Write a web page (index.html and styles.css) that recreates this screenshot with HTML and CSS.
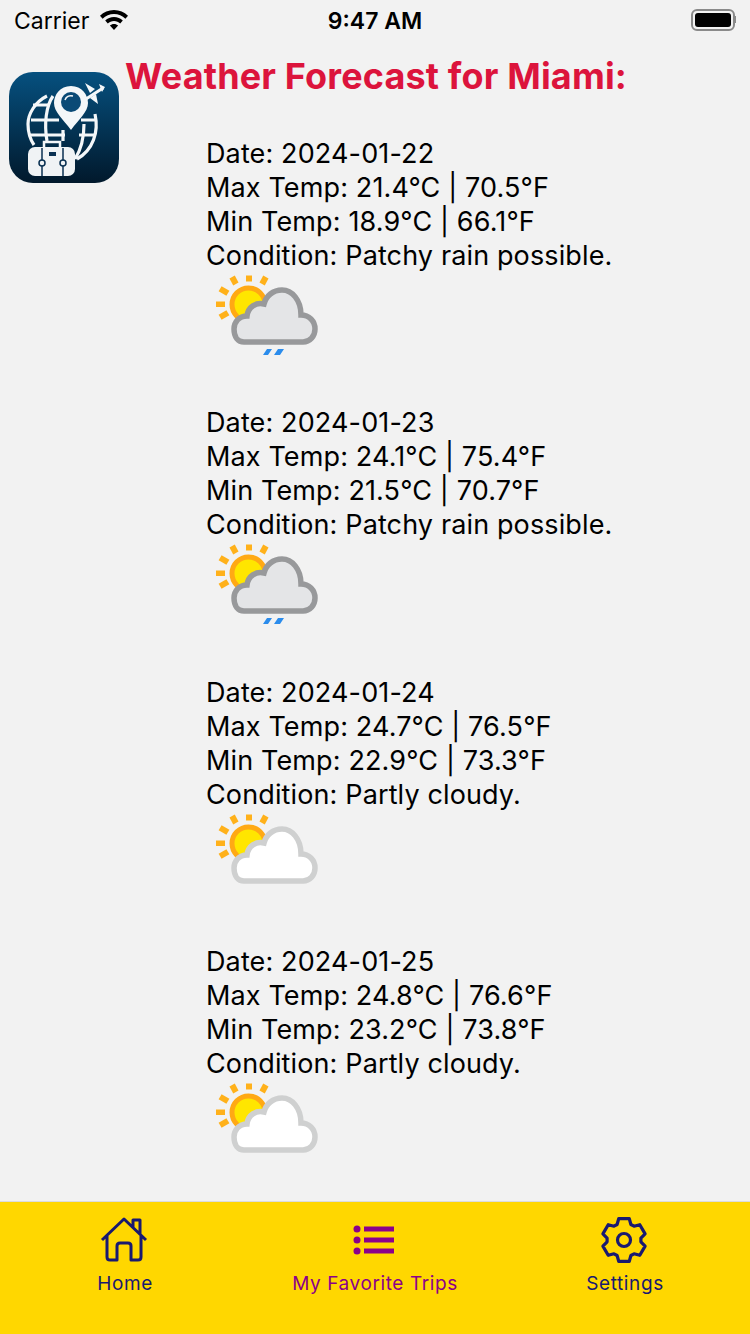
FILE: index.html
```html
<!DOCTYPE html>
<html lang="en">
<head>
<meta charset="utf-8">
<title>Weather Forecast</title>
<link rel="stylesheet" href="styles.css">
</head>
<body>
<svg class="defs" width="0" height="0" aria-hidden="true">
  <defs>
    <g id="sun" transform="translate(0 -1.500)">
      <g fill="#ffb11a">
        <rect x="46" y="11" width="6" height="6"/>
        <rect x="31" y="12" width="6" height="8" transform="rotate(-28 34 16)"/>
        <rect x="61" y="12" width="6" height="8" transform="rotate(28 64 16)"/>
        <rect x="21" y="22" width="6" height="9" transform="rotate(-60 24 26.500)"/>
        <rect x="16" y="37" width="9" height="5.500"/>
        <rect x="21" y="46" width="6" height="9" transform="rotate(60 24 50.500)"/>
      </g>
      <circle cx="48.500" cy="40" r="16.500" fill="#ffe600" stroke="#ffa914" stroke-width="5"/>
    </g>
    <path id="cloud" d="M44 76H103C110 76 115 70 115 63C115 55 109 49 101 49C101 34 92 24 82 24C73 24 66 30 64 38C56 36 48 41 47 50C39 50 34 56 34 63C34 71 38 76 44 76Z"/>
    <symbol id="rain-icon" viewBox="0 0 130 100">
      <use href="#sun"/>
      <use href="#cloud" fill="#e4e5e7" stroke="#98999b" stroke-width="5.500"/>
      <path d="M67 83H72L68 89H63ZM78 83H84L80 89H74Z" fill="#2b8cec"/>
    </symbol>
    <symbol id="cloudy-icon" viewBox="0 0 130 100">
      <use href="#sun"/>
      <use href="#cloud" fill="#fff" stroke="#cfd0d0" stroke-width="5.500"/>
    </symbol>
  </defs>
</svg>

<header class="status">
  <div class="status-left">
    <span>Carrier</span>
    <svg class="wifi" viewBox="0 0 30 22"><path d="M15 2C9.500 2 4.700 4.200 1 7.800L3.600 10.700C6.600 7.800 10.600 6 15 6S23.400 7.800 26.400 10.700L29 7.800C25.300 4.200 20.500 2 15 2ZM15 9C11.600 9 8.500 10.300 6.200 12.600L8.800 15.500C10.400 14 12.600 13 15 13S19.600 14 21.200 15.500L23.800 12.600C21.500 10.300 18.400 9 15 9ZM15 16C13.400 16 12 16.600 10.900 17.600L15 22L19.100 17.600C18 16.600 16.600 16 15 16Z"/></svg>
  </div>
  <div class="status-time">9:47 AM</div>
  <div class="status-right">
    <div class="battery"><div class="battery-fill"></div></div>
    <div class="battery-cap"></div>
  </div>
</header>

<main class="main">
  <svg class="logo" viewBox="0 0 110 111">
    <defs>
      <linearGradient id="logo-bg" x1="0" y1="0" x2="0" y2="1">
        <stop offset="0" stop-color="#06507f"/>
        <stop offset="1" stop-color="#01192c"/>
      </linearGradient>
    </defs>
    <rect width="110" height="111" rx="24" fill="url(#logo-bg)"/>
    <g fill="none" stroke="#f4f7f9" stroke-width="3.200">
      <path d="M38 24C26 30 19 42 19 52C19 60 21 67 25 73M86 42C90 60 84 78 68 87"/>
      <path d="M44 24C37 34 35 52 38 69M75 52C75 64 73 76 66 87M54 58V69"/>
      <path d="M24 33H40M22 48H50M72 48H86M20 63H56M70 63H85"/>
    </g>
    <path d="M62 14C51 14 45 23 45 31C45 40 54 47 62 58C70 47 79 40 79 31C79 23 73 14 62 14Z" fill="#f4f7f9"/>
    <circle cx="62" cy="30" r="10" fill="#0a4a76"/>
    <path d="M56 28C57 25 60 23 64 24" fill="none" stroke="#f4f7f9" stroke-width="1.500"/>
    <path d="M77 27L94 16" fill="none" stroke="#f4f7f9" stroke-width="3"/>
    <path d="M76 11L86 17L81 21ZM81 26L87 22L89 32ZM90 12L96 15L93 20Z" fill="#f4f7f9"/>
    <path d="M35 75V70H51V75" fill="none" stroke="#f4f7f9" stroke-width="2.500"/>
    <rect x="19" y="75" width="47" height="29" rx="7" fill="#f0f3f5"/>
    <path d="M33 76V104M54 76V104" stroke="#0a3152" stroke-width="1.500"/>
    <circle cx="33" cy="91" r="3" fill="#f0f3f5" stroke="#0a3152" stroke-width="1.500"/>
    <circle cx="54" cy="91" r="3" fill="#f0f3f5" stroke="#0a3152" stroke-width="1.500"/>
    <rect x="40" y="80" width="7" height="4" fill="#0a3152"/>
  </svg>
  <div class="content">
    <h1 class="title">Weather Forecast for Miami:</h1>
    <div class="forecasts">
      <section class="day">
        <p>Date: 2024-01-22</p>
        <p>Max Temp: 21.4°C | 70.5°F</p>
        <p>Min Temp: 18.9°C | 66.1°F</p>
        <p>Condition: Patchy rain possible.</p>
        <svg class="weather"><use href="#rain-icon"/></svg>
      </section>
      <section class="day">
        <p>Date: 2024-01-23</p>
        <p>Max Temp: 24.1°C | 75.4°F</p>
        <p>Min Temp: 21.5°C | 70.7°F</p>
        <p>Condition: Patchy rain possible.</p>
        <svg class="weather"><use href="#rain-icon"/></svg>
      </section>
      <section class="day">
        <p>Date: 2024-01-24</p>
        <p>Max Temp: 24.7°C | 76.5°F</p>
        <p>Min Temp: 22.9°C | 73.3°F</p>
        <p>Condition: Partly cloudy.</p>
        <svg class="weather"><use href="#cloudy-icon"/></svg>
      </section>
      <section class="day">
        <p>Date: 2024-01-25</p>
        <p>Max Temp: 24.8°C | 76.6°F</p>
        <p>Min Temp: 23.2°C | 73.8°F</p>
        <p>Condition: Partly cloudy.</p>
        <svg class="weather"><use href="#cloudy-icon"/></svg>
      </section>
    </div>
  </div>
</main>

<nav class="tabbar">
  <div class="tab">
    <svg class="tab-icon" viewBox="0 0 48 48" fill="none" stroke="#191970" stroke-width="3" stroke-linejoin="round"><path d="M2 24L24 3L46 24M7 20V41C7 43 8 44 10 44H17V30C17 28 18 27 20 27H28C30 27 31 28 31 30V44H38C40 44 41 43 41 41V20M33 11V4H40V18"/></svg>
    <span>Home</span>
  </div>
  <div class="tab tab-active">
    <svg class="tab-icon" viewBox="0 0 48 48" fill="#8b008b"><circle cx="7" cy="13" r="3.500"/><circle cx="7" cy="24" r="3.500"/><circle cx="7" cy="35" r="3.500"/><rect x="14" y="10.500" width="30" height="5"/><rect x="14" y="21.500" width="30" height="5"/><rect x="14" y="32.500" width="30" height="5"/></svg>
    <span>My Favorite Trips</span>
  </div>
  <div class="tab">
    <svg class="tab-icon" viewBox="0 0 48 48" fill="none" stroke="#191970" stroke-width="3.200" stroke-linejoin="round"><circle cx="24" cy="24" r="6.500"/><path d="M18.700 2.700L29.300 2.700L30.900 8.500L34 10.200L39.800 8.700L45.100 17.900L40.900 22.200L40.900 25.800L45.100 30.100L39.800 39.300L34 37.800L30.900 39.500L29.300 45.300L18.700 45.300L17.100 39.500L14 37.800L8.200 39.300L2.900 30.100L7.100 25.800L7.100 22.200L2.900 17.900L8.200 8.700L14 10.200L17.100 8.500Z"/></svg>
    <span>Settings</span>
  </div>
</nav>
</body>
</html>
```

FILE: styles.css
```css
* { box-sizing: border-box; }
html, body { margin: 0; padding: 0; }
body {
  width: 750px;
  height: 1334px;
  overflow: hidden;
  background: #f2f2f2;
  color: #000;
  font-family: Inter, "Liberation Sans", sans-serif;
  display: flex;
  flex-direction: column;
}
.defs { display: block; height: 0; }

.status {
  height: 40px;
  flex: none;
  display: grid;
  grid-template-columns: 1fr auto 1fr;
  align-items: center;
  padding: 2px 14px 0;
  font-size: 23px;
}
.status-left { display: flex; align-items: center; gap: 10px; }
.wifi { width: 30px; height: 22px; fill: #000; margin-top: -4px; }
.status-time { font-weight: 600; }
.status-right { display: flex; align-items: center; justify-content: flex-end; }
.battery {
  width: 44px;
  height: 22px;
  margin-top: -3px;
  border: 2px solid #8a8a8a;
  border-radius: 6px;
  padding: 2px;
}
.battery-fill { height: 100%; background: #000; border-radius: 3px; }
.battery-cap { width: 1px; height: 7px; margin-top: -3px; background: #8a8a8a; }

.main {
  flex: 1;
  min-height: 0;
  display: flex;
  align-items: flex-start;
  padding: 15px 0 0 9px;
  gap: 6px;
}
.logo { flex: none; width: 110px; height: 111px; margin-top: 17px; filter: blur(.5px); }
.content { flex: 1; min-width: 0; }
.title {
  margin: 0;
  font-size: 36px;
  line-height: 42px;
  font-weight: 700;
  letter-spacing: .15px;
  color: #dc143c;
  white-space: nowrap;
}
.forecasts { padding: 40px 0 0 81px; }
.day { height: 269.330px; }
.day p {
  margin: 0;
  font-size: 27px;
  line-height: 34px;
  letter-spacing: .13px;
  white-space: nowrap;
}
.weather { display: block; width: 130px; height: 100px; margin: -7px 0 0 -6px; filter: blur(.5px); }

.tabbar {
  flex: none;
  height: 133px;
  display: grid;
  grid-template-columns: repeat(3, 1fr);
  background: #ffd700;
  border-top: 1px solid #dcdcdc;
  color: #191970;
}
.tab {
  display: flex;
  flex-direction: column;
  align-items: center;
  padding-top: 14px;
  font-size: 19px;
  line-height: 24px;
  letter-spacing: .6px;
}
.tab-icon { display: block; width: 48px; height: 48px; margin: 0 2px 8px 0; }
.tab-active { color: #8b008b; }
```
